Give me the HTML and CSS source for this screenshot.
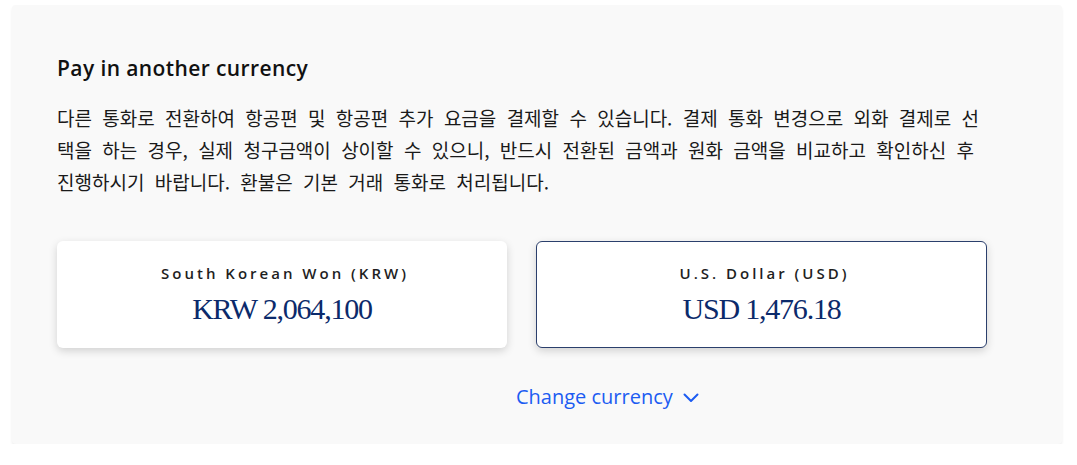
FILE: index.html
```html
<!DOCTYPE html>
<html lang="ko">
<head>
<meta charset="utf-8">
<title>Pay in another currency</title>
<link rel="stylesheet" href="styles.css">
</head>
<body>
<section class="panel">
  <h2 class="title">Pay in another currency</h2>
  <p class="desc">다른 통화로 전환하여 항공편 및 항공편 추가 요금을 결제할 수 있습니다. 결제 통화 변경으로 외화 결제로 선택을 하는 경우, 실제 청구금액이 상이할 수 있으니, 반드시 전환된 금액과 원화 금액을 비교하고 확인하신 후 진행하시기 바랍니다. 환불은 기본 거래 통화로 처리됩니다.</p>
  <div class="cards">
    <div class="card">
      <div class="label">South Korean Won (KRW)</div>
      <div class="amount">KRW 2,064,100</div>
    </div>
    <div class="card selected">
      <div class="label">U.S. Dollar (USD)</div>
      <div class="amount">USD 1,476.18</div>
    </div>
  </div>
  <div class="change-row">
    <a class="change" href="#">Change currency
      <svg class="chev" width="16" height="10" viewBox="0 0 16 10" aria-hidden="true"><path d="M1.5 1.5 L8 8 L14.5 1.5" fill="none" stroke="currentColor" stroke-width="2" stroke-linecap="round" stroke-linejoin="round"/></svg>
    </a>
  </div>
</section>
</body>
</html>
```

FILE: styles.css
```css
html, body {
  margin: 0;
  padding: 0;
  background: #ffffff;
}

body {
  font-family: "Open Sans", "Noto Sans CJK KR", sans-serif;
  color: #1a1a1a;
}

.panel {
  box-sizing: border-box;
  margin: 5px 15px 0 12px;
  height: 439px;
  padding: 51px 45px 0;
  background: #f9f9f9;
  border-radius: 4px;
  box-shadow: 0 2px 3px rgba(0, 0, 0, 0.07);
}

.title {
  margin: 0;
  font-size: 21px;
  line-height: 24px;
  font-weight: 600;
  letter-spacing: 0.4px;
  color: #111111;
}

.desc {
  margin: 22px 0 0;
  width: 930px;
  font-family: "Noto Sans CJK KR", sans-serif;
  font-size: 19px;
  line-height: 32px;
  word-spacing: 5px;
  color: #1a1a1a;
}

.cards {
  margin-top: 43px;
  width: 930px;
  display: grid;
  grid-template-columns: 450px 451px;
  column-gap: 29px;
}

.card {
  box-sizing: border-box;
  height: 107px;
  padding-top: 21px;
  background: #ffffff;
  border: 1px solid transparent;
  border-radius: 6px;
  box-shadow: 0 3px 8px rgba(0, 0, 0, 0.16);
  text-align: center;
}

.card.selected {
  border-color: #2b3f6c;
}

.label {
  padding-left: 6px;
  font-size: 15px;
  line-height: 20px;
  font-weight: 600;
  letter-spacing: 3px;
  color: #1f1f1f;
}

.amount {
  margin-top: 8px;
  font-family: "Liberation Serif", serif;
  font-size: 30px;
  line-height: 36px;
  letter-spacing: -1.2px;
  color: #0b2a6b;
}

.change-row {
  margin-top: 37px;
  padding-left: 459px;
}

.change {
  display: inline-flex;
  align-items: center;
  gap: 10px;
  font-size: 20px;
  line-height: 24px;
  color: #1c5cf2;
  text-decoration: none;
}

.chev {
  display: block;
  margin-top: 2px;
}
```
